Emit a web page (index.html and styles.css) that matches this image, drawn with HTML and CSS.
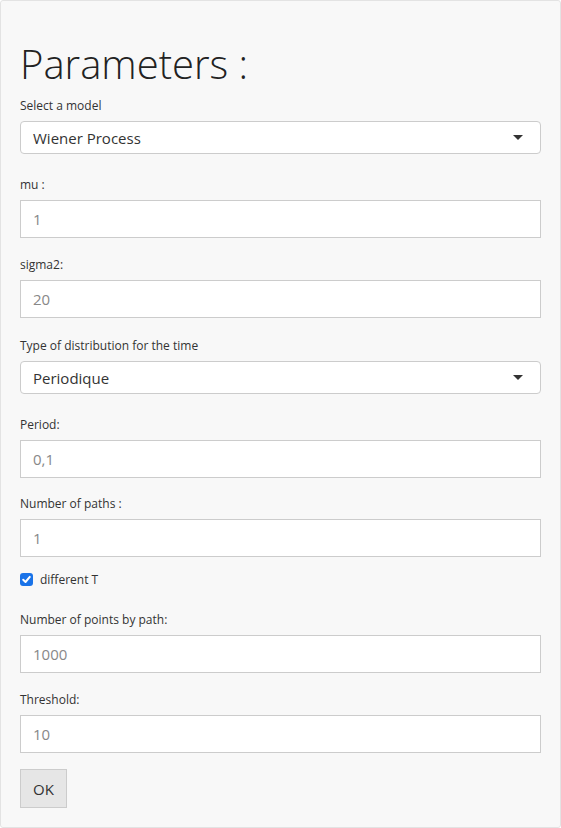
FILE: index.html
```html
<!DOCTYPE html>
<html>
<head>
<meta charset="utf-8">
<link rel="stylesheet" href="styles.css">
</head>
<body>
<div class="well">
  <h2 class="title">Parameters :</h2>
  <div class="group group-select">
    <label class="lbl">Select a model</label>
    <div class="select"><span>Wiener Process</span><span class="caret"></span></div>
  </div>
  <div class="group">
    <label class="lbl">mu :</label>
    <div class="input">1</div>
  </div>
  <div class="group">
    <label class="lbl">sigma2:</label>
    <div class="input">20</div>
  </div>
  <div class="group group-select">
    <label class="lbl">Type of distribution for the time</label>
    <div class="select"><span>Periodique</span><span class="caret"></span></div>
  </div>
  <div class="group group-short">
    <label class="lbl">Period:</label>
    <div class="input">0,1</div>
  </div>
  <div class="group group-tight">
    <label class="lbl">Number of paths :</label>
    <div class="input">1</div>
  </div>
  <div class="check">
    <span class="box"><svg viewBox="0 0 13 13" width="13" height="13"><path d="M3.2 6.8 L5.5 9 L9.8 3.9" fill="none" stroke="#fff" stroke-width="2" stroke-linecap="round" stroke-linejoin="round"/></svg></span>
    <span class="check-lbl">different T</span>
  </div>
  <div class="group">
    <label class="lbl">Number of points by path:</label>
    <div class="input">1000</div>
  </div>
  <div class="group">
    <label class="lbl">Threshold:</label>
    <div class="input">10</div>
  </div>
  <button class="btn">OK</button>
</div>
</body>
</html>
```
FILE: styles.css
```css
html, body {
  margin: 0;
  padding: 0;
  background: #ffffff;
}
body {
  font-family: "Open Sans", "Noto Sans", sans-serif;
  color: #333333;
}
.well {
  box-sizing: border-box;
  width: 561px;
  min-height: 827px;
  background: #f8f8f8;
  border: 1px solid #e3e3e3;
  border-radius: 3px;
  padding: 19px 19px 19px 19px;
  display: flex;
  flex-direction: column;
  align-items: stretch;
}
.title {
  margin: 18px 0 4px 0;
  font-size: 40px;
  font-weight: 300;
  line-height: 52px;
  color: #222;
  letter-spacing: 0;
}
.group {
  display: flex;
  flex-direction: column;
  margin-bottom: 16px;
}
.group-select { margin-top: 1px; margin-bottom: 20px; }
.group-short { margin-bottom: 15px; }
.group-tight { margin-bottom: 13px; }
.lbl {
  font-size: 12px;
  line-height: 18px;
  margin-top: 2px;
  margin-bottom: 6px;
  color: #333;
}
.select {
  box-sizing: border-box;
  height: 33px;
  background: #fff;
  border: 1px solid #cccccc;
  border-radius: 4px;
  display: flex;
  align-items: center;
  justify-content: space-between;
  padding: 0 17px 0 12px;
  font-size: 15px;
  color: #333;
}
.caret {
  width: 0;
  height: 0;
  border-left: 5px solid transparent;
  border-right: 5px solid transparent;
  border-top: 5px solid #333;
}
.input {
  box-sizing: border-box;
  height: 38px;
  background: #fff;
  border: 1px solid #cccccc;
  display: flex;
  align-items: center;
  padding: 0 12px;
  font-size: 15px;
  color: #888;
}
.check {
  display: flex;
  align-items: center;
  gap: 7px;
  margin: 0 0 21px 0;
  height: 18px;
}
.box {
  width: 13px;
  height: 13px;
  background: #1a73e8;
  border-radius: 3px;
  display: flex;
}
.check-lbl { font-size: 12px; color: #333; }
.btn {
  align-self: flex-start;
  box-sizing: border-box;
  width: 47px;
  height: 39px;
  margin-top: 0;
  background: #e6e6e6;
  border: 1px solid #cccccc;
  border-radius: 0;
  font-family: "Open Sans", sans-serif;
  font-size: 15px;
  color: #333;
  padding: 0;
}
```
